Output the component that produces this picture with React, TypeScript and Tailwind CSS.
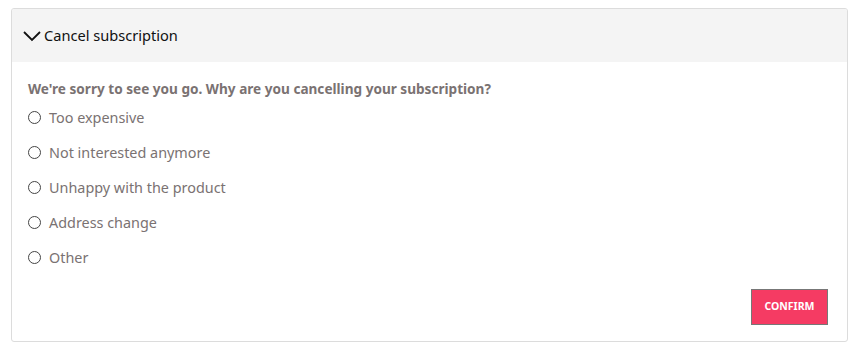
import React from "react";

const options = [
  "Too expensive",
  "Not interested anymore",
  "Unhappy with the product",
  "Address change",
  "Other",
];

export default function App() {
  return (
    <div className="w-[854px] h-[348px] bg-white pt-[8px] pl-[11px]" style={{ fontFamily: '"Noto Sans", "Open Sans", sans-serif' }}>
      <div className="w-[837px] h-[334px] border border-[#dcdcdc] rounded-[3px] flex flex-col overflow-hidden">
        <div className="h-[53px] bg-[#f4f4f4] flex items-center pl-[10px] gap-[2px]">
          <svg width="20" height="14" viewBox="0 0 20 14" className="mt-[1px]">
            <path d="M2 3 L10 11 L18 3" fill="none" stroke="#111" strokeWidth="1.8" />
          </svg>
          <span className="text-[14.6px] text-[#111]">Cancel subscription</span>
        </div>
        <div className="flex-1 flex flex-col pl-[16px] pr-[19px] pt-[17px]">
          <div className="text-[13.6px] font-bold text-[#7a7272] leading-[20px]">
            We're sorry to see you go. Why are you cancelling your subscription?
          </div>
          <div className="flex flex-col mt-[1px]">
            {options.map((o) => (
              <label key={o} className="h-[35px] flex items-center gap-[8px] text-[14.4px] text-[#7a7272]">
                <span className="w-[13px] h-[13px] rounded-full border border-[#444] bg-white" />
                <span>{o}</span>
              </label>
            ))}
          </div>
          <div className="flex-1 flex justify-end items-end pb-[16px]">
            <button className="w-[77px] h-[36px] bg-[#f53b63] border border-[#777] text-white text-[10.5px] font-bold">
              CONFIRM
            </button>
          </div>
        </div>
      </div>
    </div>
  );
}
